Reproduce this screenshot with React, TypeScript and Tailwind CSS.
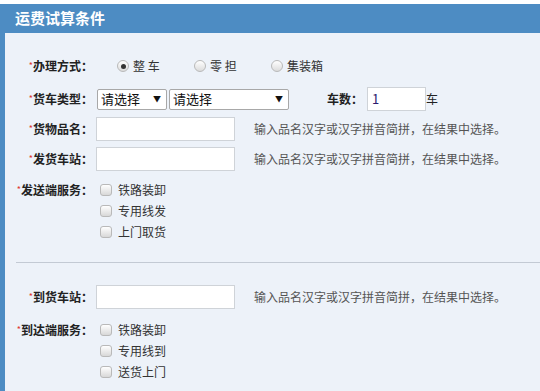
import React from 'react';

const font = { fontFamily: '"Noto Sans CJK SC", "Liberation Sans", sans-serif' };

function Label({ text }: { text: string }) {
  return (
    <div className="w-[88px] shrink-0 text-right text-[12px] font-bold text-[#222] leading-none whitespace-nowrap">
      <span className="text-[9px] text-[#e0322f] font-normal align-[2px]">*</span>
      {text}：
    </div>
  );
}

function Radio({ label, checked }: { label: string; checked?: boolean }) {
  return (
    <div className="w-[77px] flex items-center">
      <span className="w-[12px] h-[12px] rounded-full border border-[#b9b9b9] bg-gradient-to-b from-white to-[#dcdcdc] flex items-center justify-center">
        {checked && <span className="w-[5px] h-[5px] rounded-full bg-[#333]" />}
      </span>
      <span className="ml-[4px] text-[12px] text-[#333] whitespace-pre">{label}</span>
    </div>
  );
}

function Check({ label }: { label: string }) {
  return (
    <div className="h-[21px] flex items-center">
      <span className="w-[12px] h-[12px] rounded-[3px] border border-[#b9b9b9] bg-gradient-to-b from-white to-[#d8d8d8]" />
      <span className="ml-[6px] text-[12px] text-[#333]">{label}</span>
    </div>
  );
}

function Select({ w }: { w: string }) {
  return (
    <div className={`${w} h-[21px] bg-white border border-[#a8a8a8] rounded-[2px] flex items-center justify-between px-[3px]`}>
      <span className="text-[13px] text-[#111]">请选择</span>
      <span className="text-[8px] text-[#111] mr-[2px]">▼</span>
    </div>
  );
}

const hint = '输入品名汉字或汉字拼音简拼，在结果中选择。';

function TextRow({ label, mt }: { label: string; mt: string }) {
  return (
    <div className={`${mt} h-[24px] flex items-center`}>
      <Label text={label} />
      <div className="ml-[3px] w-[139px] h-[24px] bg-white border border-[#cfd3d8]" />
      <span className="ml-[19px] text-[12px] text-[#555]">{hint}</span>
    </div>
  );
}

function Services({ label, items, mt }: { label: string; items: string[]; mt: string }) {
  return (
    <div className={`${mt} flex items-start`}>
      <div className="h-[21px] flex items-center">
        <Label text={label} />
      </div>
      <div className="ml-[7px]">
        {items.map((it) => (
          <Check key={it} label={it} />
        ))}
      </div>
    </div>
  );
}

export default function App() {
  return (
    <div className="w-[540px] h-[391px] bg-white pt-[4px] overflow-hidden" style={font}>
      <div className="h-[387px] border-l-[5px] border-[#4d8cc3] bg-[#edf2f9]">
        <div className="h-[29px] bg-[#4d8cc3] flex items-center -ml-[5px] pl-[15px]">
          <span className="text-white text-[15px] font-bold">运费试算条件</span>
        </div>

        <div className="mt-[21px] h-[24px] flex items-center">
          <Label text="办理方式" />
          <div className="ml-[24px] flex">
            <Radio label="整 车" checked />
            <Radio label="零 担" />
            <Radio label="集装箱" />
          </div>
        </div>

        <div className="mt-[9px] h-[24px] flex items-center">
          <Label text="货车类型" />
          <div className="ml-[4px] flex gap-[2px]">
            <Select w="w-[70px]" />
            <Select w="w-[120px]" />
          </div>
          <span className="ml-[38px] text-[12px] font-bold text-[#222]">车数：</span>
          <div className="ml-[4px] w-[59px] h-[24px] bg-white border border-[#cfd3d8] flex items-center pl-[4px] text-[13px] text-[#2a1a6e]">
            1
          </div>
          <span className="text-[12px] text-[#222]">车</span>
        </div>

        <TextRow label="货物品名" mt="mt-[6px]" />
        <TextRow label="发货车站" mt="mt-[6px]" />

        <Services label="发送端服务" items={['铁路装卸', '专用线发', '上门取货']} mt="mt-[8px]" />

        <div className="mt-[20px] ml-[11px] h-px bg-[#c3cad4]" />

        <TextRow label="到货车站" mt="mt-[22px]" />

        <Services label="到达端服务" items={['铁路装卸', '专用线到', '送货上门']} mt="mt-[10px]" />
      </div>
    </div>
  );
}
